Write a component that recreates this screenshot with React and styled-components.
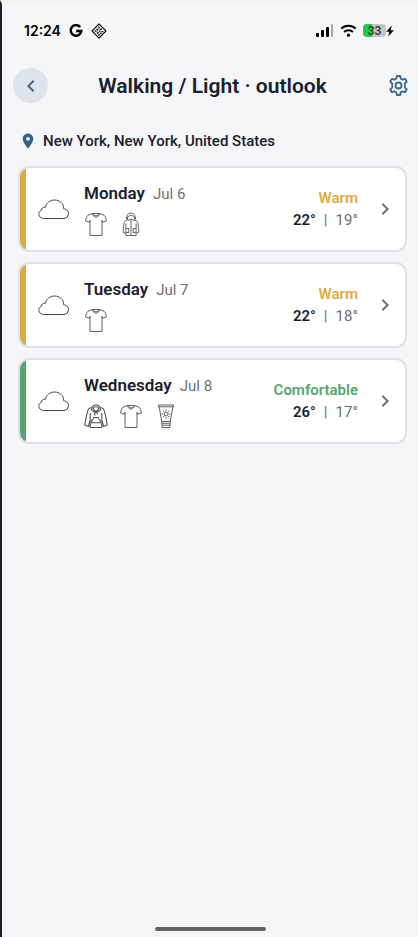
import React from 'react'
import styled, { createGlobalStyle } from 'styled-components'
import { MdChevronLeft, MdChevronRight, MdLocationOn } from 'react-icons/md'

const GlobalStyle = createGlobalStyle`
    * {
        box-sizing: border-box;
    }
    body {
        margin: 0;
        background-color: #f4f6f8;
        font-family: Roboto, "Liberation Sans", sans-serif;
        color: #1a202c;
    }
`
const Screen = styled.div`
    min-height: 100vh;
    display: flex;
    flex-direction: column;
    background-color: #f4f6f8;
    border-left: 2px solid #1d1c22;
    border-top: 4px solid #f2f2f2;
`
const StatusBar = styled.div`
    height: 53px;
    display: flex;
    align-items: center;
    justify-content: space-between;
    padding: 0 24px 0 22px;
    color: #000;
`
const StatusGroup = styled.div`
    display: flex;
    align-items: center;
    gap: ${(prop) => prop.$gap}px;
`
const Clock = styled.span`
    font-family: Inter, sans-serif;
    font-size: 14px;
    font-weight: 600;
    line-height: 20px;
`
const BatteryWrap = styled.div`
    display: flex;
    align-items: center;
`
const Battery = styled.span`
    width: 23px;
    height: 13px;
    border-radius: 4px;
    background: linear-gradient(to right, #1fc84c 38%, #c3c4c6 38%);
    color: #333;
    font-size: 12px;
    font-weight: 500;
    line-height: 14px;
    text-align: center;
`
const Header = styled.header`
    height: 57px;
    display: flex;
    align-items: center;
    padding: 0 9px 0 11px;
`
const BackButton = styled.button`
    width: 35px;
    height: 35px;
    display: flex;
    align-items: center;
    justify-content: center;
    padding: 0;
    border: none;
    border-radius: 50%;
    background-color: #dde4ec;
    color: #3b688c;
    cursor: pointer;
`
const Title = styled.h1`
    flex: 1;
    margin: 0;
    font-size: 21px;
    font-weight: 600;
    line-height: 28px;
    text-align: center;
`
const SettingsButton = styled.button`
    width: 32px;
    display: flex;
    justify-content: flex-end;
    padding: 0;
    border: none;
    background: none;
    color: #3b688c;
    cursor: pointer;
`
const Main = styled.main`
    flex: 1;
    padding: 17px 11px 0 16px;
`
const Location = styled.div`
    height: 20px;
    display: flex;
    align-items: center;
    gap: 6px;
    padding-left: 1px;
    font-size: 15px;
    font-weight: 500;
    line-height: 20px;

    svg {
        color: #2f6187;
    }
`
const DayList = styled.ul`
    list-style: none;
    margin: 0;
    padding: 15px 0 0;
    display: flex;
    flex-direction: column;
    gap: 10px;
`
const DayCard = styled.button`
    width: 100%;
    height: 86px;
    display: flex;
    align-items: center;
    padding: 0 8px 0 0;
    border: 2px solid #dee2e7;
    border-radius: 11px;
    background-color: #fff;
    color: #1a202c;
    font-family: inherit;
    text-align: left;
    overflow: hidden;
    cursor: pointer;
`
const Stripe = styled.span`
    align-self: stretch;
    width: 6px;
    margin-right: 12px;
    background-color: ${(prop) => prop.$color};
`
const DayInfo = styled.div`
    flex: 1;
    padding-left: 14px;
`
const DayHeading = styled.div`
    display: flex;
    align-items: baseline;
    gap: 8px;
    line-height: 24px;
`
const DayName = styled.span`
    font-size: 17px;
    font-weight: 600;
`
const DayDate = styled.span`
    font-size: 15px;
    color: #6b7077;
`
const Clothes = styled.div`
    height: 26px;
    display: flex;
    align-items: center;
    gap: 11px;
    margin-top: 5px;
`
const Forecast = styled.div`
    text-align: right;
    line-height: 22px;
    margin-right: 15px;
`
const Feel = styled.div`
    font-size: 15px;
    font-weight: 600;
    color: ${(prop) => prop.$color};
`
const Temps = styled.div`
    display: flex;
    justify-content: flex-end;
    gap: 8px;
    font-size: 15px;
    color: #6b7077;

    b {
        font-weight: 600;
        color: #1a202c;
    }
`
const HomeBar = styled.div`
    width: 111px;
    height: 4px;
    margin: 0 auto 6px;
    border-radius: 2px;
    background-color: #646466;
`

const GoogleIcon = () => (
    <svg width="14" height="14" viewBox="0 0 14 14" fill="none" stroke="#000" strokeWidth="2.4">
        <path d="M11.2 3.1A5.3 5.3 0 1 0 12.3 7H7.2" />
    </svg>
)

const DiamondIcon = () => (
    <svg width="16" height="16" viewBox="0 0 16 16" fill="none" stroke="#111" strokeLinejoin="round">
        <path d="M8 1l7 7-7 7-7-7z" strokeWidth="1.1" />
        <path d="M8 3.4v2M5.6 5.8l1.6 1.4M10.6 5.6L9 7M3.6 8h2M10.4 8.6h2M6 10.6l1.6-1.6M9.4 9.6l.8 1.4M8 10.8v2" strokeWidth="1.4" />
        <circle cx="8.6" cy="8.2" r="0.8" fill="#111" stroke="none" />
    </svg>
)

const SignalIcon = () => (
    <svg width="18" height="14" viewBox="0 0 18 14">
        <rect x="0" y="9" width="3" height="4" rx="1" />
        <rect x="5" y="6" width="3" height="7" rx="1" />
        <rect x="10" y="3" width="3" height="10" rx="1" />
        <rect x="15" y="0" width="2" height="13" rx="1" fill="#a5a6a8" />
    </svg>
)

const WifiIcon = () => (
    <svg width="17" height="14" viewBox="0 0 16 14" fill="none" stroke="#000" strokeWidth="2">
        <path d="M.8 4.6a10.4 10.4 0 0 1 14.4 0" />
        <path d="M3.6 8a6.4 6.4 0 0 1 8.8 0" />
        <circle cx="8" cy="11.2" r="1.6" fill="#000" stroke="none" />
    </svg>
)

const BoltIcon = () => (
    <svg width="8" height="12" viewBox="0 0 8 12">
        <path d="M5.8.5L0 6.8h3.3L2.2 11.5 8 5.2H4.7z" />
    </svg>
)

const GearIcon = () => (
    <svg width="21" height="21" viewBox="0 0 20 21" fill="none" stroke="currentColor" strokeWidth="1.8" strokeLinejoin="round">
        <path d="M8.3 1h3.4l.5 2.6 1.9 1.1 2.5-.9 1.7 2.9-2 1.8v4l2 1.8-1.7 2.9-2.5-.9-1.9 1.1-.5 2.6H8.3l-.5-2.6-1.9-1.1-2.5.9-1.7-2.9 2-1.8v-4l-2-1.8 1.7-2.9 2.5.9 1.9-1.1z" />
        <circle cx="10" cy="10.5" r="3" />
    </svg>
)

const CloudIcon = () => (
    <svg width="32" height="20" viewBox="0 0 32 20" fill="none" stroke="#4a4a4c" strokeWidth="1">
        <path d="M6 19.5h20a4.8 4.8 0 0 0 1.4-9.3A3.9 3.9 0 0 0 25.7 9.7C25.9 4.5 21.5 1 16.6 1 12 1 8.5 3.8 7.4 8.3 4.9 8 3.3 9.4 3.3 11.4 1.7 12 .8 13.3 .8 15c0 2.6 2.2 4.5 5.2 4.5z" />
    </svg>
)

const lineIcon = {
    width: 24,
    height: 25,
    viewBox: '0 0 24 25',
    fill: 'none',
    stroke: '#505052',
    strokeWidth: 0.9,
    strokeLinejoin: 'round',
}

const TshirtIcon = () => (
    <svg {...lineIcon}>
        <path d="M8.5 1.5L4 3.2C2.7 4 2 6.5 1.6 9l3.8 1.2.6-2V23.5h12V8.2l.6 2L22.4 9C22 6.5 21.3 4 20 3.2l-4.5-1.7" />
        <path d="M8.5 1.5h7C15 4 13.8 5 12 5S9 4 8.5 1.5zM9.5 1.8c.3 1.3 1.2 2 2.5 2s2.2-.7 2.5-2" />
    </svg>
)

const CoatIcon = () => (
    <svg {...lineIcon}>
        <path d="M8.3 7C7.3 3.5 9 1 12 1s4.7 2.5 3.7 6M8.3 7c.2-2.2 1.5-3.5 3.7-3.5s3.5 1.3 3.7 3.5M8 4.7l-.7 1.5 1.4 2.2 3.3-1.2 3.3 1.2 1.4-2.2-.7-1.5" />
        <path d="M8.3 8L6 9.2C5 10 4.4 14 4.3 20.5l2.4.5M15.7 8L18 9.2c1 .8 1.6 4.8 1.7 11.3l-2.4.5M6.900 11.5v12h10.200v-12M12 8v15.5" />
        <path d="M7.2 16.5h2.6v4H7.2M16.8 16.5h-2.6v4h2.6" />
    </svg>
)

const HoodieIcon = () => (
    <svg {...lineIcon} strokeWidth={1.1}>
        <path d="M8 3.5C8.7 1.6 10.2 1 12 1s3.3.6 4 2.5l.5 2-3 2.7h-3l-3-2.7zM9.3 4.2c.6-1 1.5-1.4 2.7-1.4s2.1.4 2.7 1.4c-.5 1.6-1.4 2.8-2.7 3.3-1.3-.5-2.2-1.7-2.7-3.3zM10.8 8.2v3.3M13.2 8.2v2.3" />
        <path d="M7.5 3.5L5 4.5C3.500 5.300 2.500 10 .8 21l3.600 1.500 1.800-6.500M16.500 3.500L19 4.500c1.500.8 2.500 5.500 4.200 16.500l-3.600 1.500-1.800-6.500M6.200 9v14.500h11.600V9" />
        <path d="M9.700 13.500h4.600c.2 1.500 1 2.300 2 3v2.300H7.700v-2.300c1-.7 1.800-1.500 2-3z" />
    </svg>
)

const SunscreenIcon = () => (
    <svg {...lineIcon}>
        <path d="M4.5 1h15v1.8h-15zM5.2 2.8L7.7 17.5h8.6l2.5-14.7M7.7 17.5l.4 6h7.8l.4-6M8 19.3h8M8.2 21.2h7.6" />
        <circle cx="12" cy="10" r="1.9" />
        <path d="M12 5.5v1.7M12 12.8v1.7M7.6 10h1.7M14.7 10h1.7M8.9 6.9l1.2 1.2M13.9 11.9l1.2 1.2M15.1 6.9l-1.2 1.2M10.1 11.9l-1.2 1.2" />
    </svg>
)

const days = [
    { name: 'Monday', date: 'Jul 6', feel: 'Warm', color: '#ddaa43', high: 22, low: 19, clothes: [TshirtIcon, CoatIcon] },
    { name: 'Tuesday', date: 'Jul 7', feel: 'Warm', color: '#ddaa43', high: 22, low: 18, clothes: [TshirtIcon] },
    { name: 'Wednesday', date: 'Jul 8', feel: 'Comfortable', color: '#56a570', high: 26, low: 17, clothes: [HoodieIcon, TshirtIcon, SunscreenIcon] },
]

const App = () => {
    return (
        <Screen>
            <GlobalStyle />
            <StatusBar>
                <StatusGroup $gap={8}>
                    <Clock>12:24</Clock>
                    <GoogleIcon />
                    <DiamondIcon />
                </StatusGroup>
                <StatusGroup $gap={6}>
                    <SignalIcon />
                    <WifiIcon />
                    <BatteryWrap>
                        <Battery>33</Battery>
                        <BoltIcon />
                    </BatteryWrap>
                </StatusGroup>
            </StatusBar>
            <Header>
                <BackButton aria-label="Back"><MdChevronLeft size={24} /></BackButton>
                <Title>Walking / Light · outlook</Title>
                <SettingsButton aria-label="Settings"><GearIcon /></SettingsButton>
            </Header>
            <Main>
                <Location>
                    <MdLocationOn size={18} />
                    New York, New York, United States
                </Location>
                <DayList>
                    {days.map((day) => (
                        <li key={day.name}>
                            <DayCard>
                                <Stripe $color={day.color} />
                                <CloudIcon />
                                <DayInfo>
                                    <DayHeading>
                                        <DayName>{day.name}</DayName>
                                        <DayDate>{day.date}</DayDate>
                                    </DayHeading>
                                    <Clothes>
                                        {day.clothes.map((Icon, i) => <Icon key={i} />)}
                                    </Clothes>
                                </DayInfo>
                                <Forecast>
                                    <Feel $color={day.color}>{day.feel}</Feel>
                                    <Temps><b>{day.high}°</b><span>|</span><span>{day.low}°</span></Temps>
                                </Forecast>
                                <MdChevronRight size={24} color="#6f7073" />
                            </DayCard>
                        </li>
                    ))}
                </DayList>
            </Main>
            <HomeBar />
        </Screen>
    )
}

export default App
